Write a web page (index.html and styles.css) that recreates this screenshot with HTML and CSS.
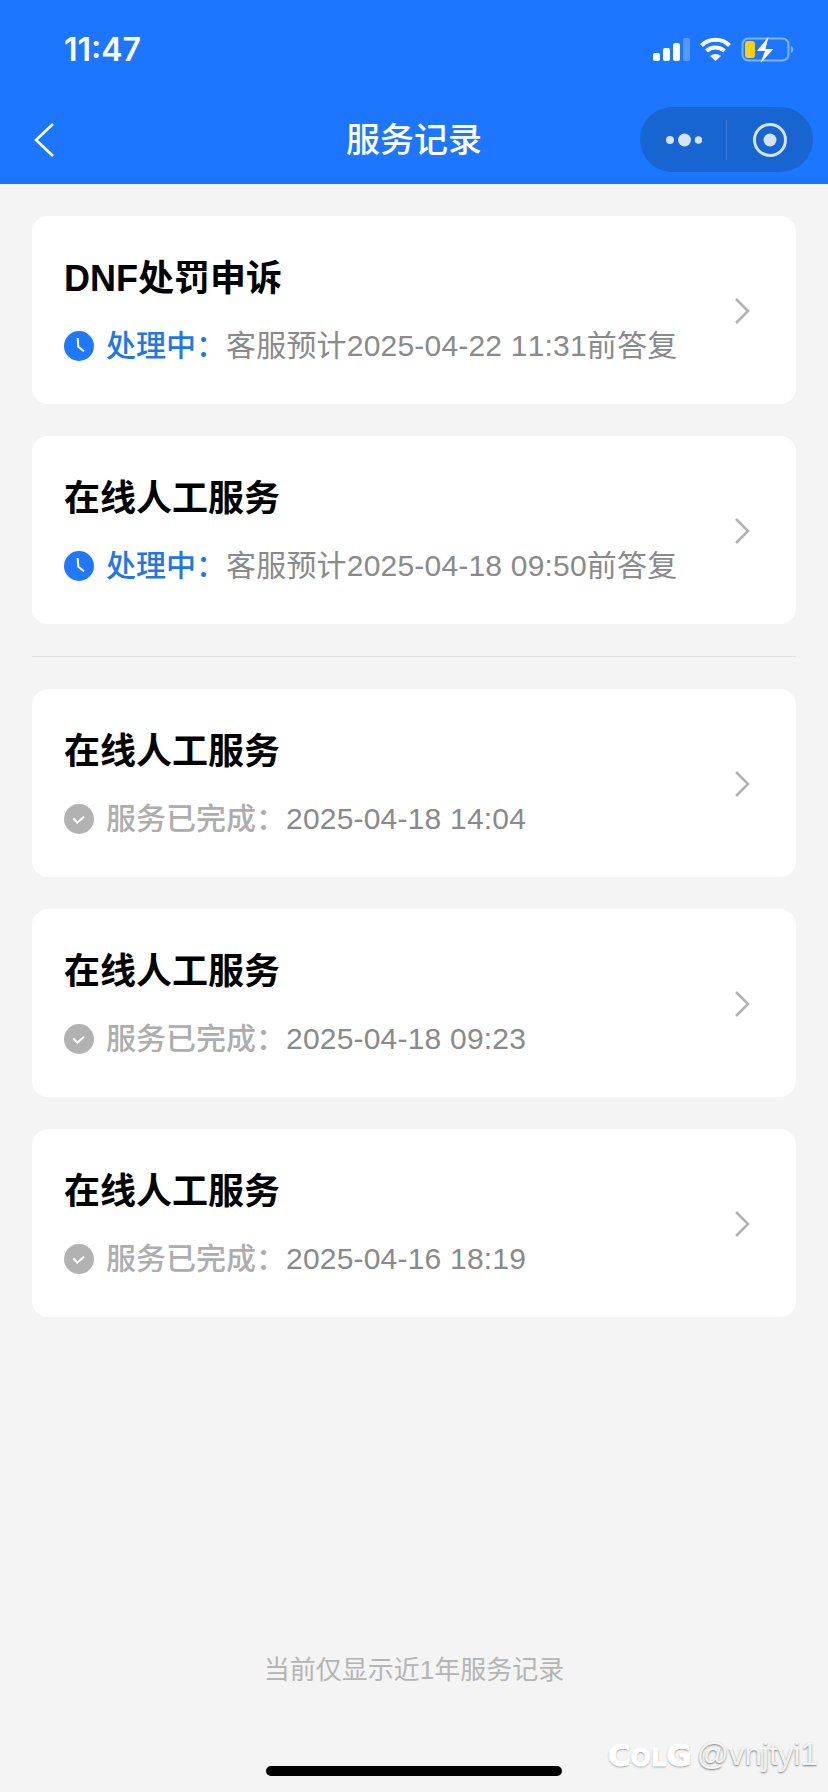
FILE: index.html
```html
<!DOCTYPE html>
<html lang="zh-CN">
<head>
<meta charset="UTF-8">
<meta name="viewport" content="width=device-width, initial-scale=1.0">
<title>服务记录</title>
<link rel="stylesheet" href="styles.css">
</head>
<body>

<div class="page">
  <div class="header">
    <div class="status">
      <span class="time">11:47</span>
      <svg class="status-icons" width="142" height="30" viewBox="0 0 142 30">
        <rect x="0" y="17" width="7" height="8" rx="2" fill="#fff"/>
        <rect x="10" y="12" width="7" height="13" rx="2" fill="#fff"/>
        <rect x="20" y="7" width="7" height="18" rx="2" fill="#fff"/>
        <rect x="30" y="2" width="7" height="23" rx="2" fill="#fff" opacity="0.25"/>
        <path d="M48.500 9.500 A20 20 0 0 1 76.500 9.500" fill="none" stroke="#fff" stroke-width="4"/>
        <path d="M53.500 15 A13 13 0 0 1 71.500 15" fill="none" stroke="#fff" stroke-width="4"/>
        <path d="M57 20 Q62.500 16 68 20 L62.500 25 Z" fill="#fff"/>
        <rect x="89.500" y="2.500" width="46" height="22" rx="6" fill="none" stroke="#fff" stroke-opacity="0.45" stroke-width="2"/>
        <rect x="92" y="5" width="10" height="17" rx="3" fill="#ffcf0a"/>
        <path d="M138 10 C141 11 141 16 138 17 Z" fill="#fff" opacity="0.45"/>
        <path d="M115.500 0.700 L104 15 L112 15 L107.500 27 L120.500 13 L112.500 13 Z" fill="#fff"/>
      </svg>
    </div>
    <div class="nav">
      <svg class="back" width="24" height="36" viewBox="0 0 24 36">
        <path d="M20 2 L3 18 L20 34" fill="none" stroke="#fff" stroke-width="2.600"/>
      </svg>
      <div class="nav-title">服务记录</div>
      <div class="capsule">
        <svg class="capsule-btn" width="36" height="16" viewBox="0 0 36 16">
          <circle cx="4" cy="8" r="4" fill="#d5e2f8"/>
          <circle cx="18.500" cy="8" r="6.500" fill="#d5e2f8"/>
          <circle cx="32.500" cy="8" r="3.800" fill="#d5e2f8"/>
        </svg>
        <span class="capsule-line"></span>
        <svg class="capsule-btn" width="36" height="36" viewBox="0 0 36 36">
          <circle cx="18" cy="18" r="15.500" fill="none" stroke="#d5e2f8" stroke-width="3"/>
          <circle cx="18" cy="18" r="6.500" fill="#d5e2f8"/>
        </svg>
      </div>
    </div>
  </div>

  <div class="list">
    <div class="card">
      <div class="card-info">
        <div class="card-title">DNF处罚申诉</div>
        <div class="card-state">
          <svg class="state-icon" width="30" height="30" viewBox="0 0 30 30">
            <circle cx="15" cy="15" r="15" fill="#1f78ff"/>
            <path d="M13.700 7 L14.300 15.700 L20 20.300" fill="none" stroke="#fff" stroke-width="2"/>
          </svg>
          <span class="state-doing">处理中&#65306;</span><span class="state-text">客服预计2025-04-22 11:31前答复</span>
        </div>
      </div>
      <svg class="arrow" width="16" height="28" viewBox="0 0 16 28">
        <path d="M2 2 L14 14 L2 26" fill="none" stroke="#b2b2b2" stroke-width="2.600"/>
      </svg>
    </div>

    <div class="card">
      <div class="card-info">
        <div class="card-title">在线人工服务</div>
        <div class="card-state">
          <svg class="state-icon" width="30" height="30" viewBox="0 0 30 30">
            <circle cx="15" cy="15" r="15" fill="#1f78ff"/>
            <path d="M13.700 7 L14.300 15.700 L20 20.300" fill="none" stroke="#fff" stroke-width="2"/>
          </svg>
          <span class="state-doing">处理中&#65306;</span><span class="state-text">客服预计2025-04-18 09:50前答复</span>
        </div>
      </div>
      <svg class="arrow" width="16" height="28" viewBox="0 0 16 28">
        <path d="M2 2 L14 14 L2 26" fill="none" stroke="#b2b2b2" stroke-width="2.600"/>
      </svg>
    </div>

    <div class="line"></div>

    <div class="card">
      <div class="card-info">
        <div class="card-title">在线人工服务</div>
        <div class="card-state">
          <svg class="state-icon" width="30" height="30" viewBox="0 0 30 30">
            <circle cx="15" cy="15" r="15" fill="#b2b2b2"/>
            <path d="M9.300 14.300 L13.300 18.700 L20 12.700" fill="none" stroke="#fff" stroke-width="2"/>
          </svg>
          <span class="state-done">服务已完成&#65306;</span><span class="state-text">2025-04-18 14:04</span>
        </div>
      </div>
      <svg class="arrow" width="16" height="28" viewBox="0 0 16 28">
        <path d="M2 2 L14 14 L2 26" fill="none" stroke="#b2b2b2" stroke-width="2.600"/>
      </svg>
    </div>

    <div class="card">
      <div class="card-info">
        <div class="card-title">在线人工服务</div>
        <div class="card-state">
          <svg class="state-icon" width="30" height="30" viewBox="0 0 30 30">
            <circle cx="15" cy="15" r="15" fill="#b2b2b2"/>
            <path d="M9.300 14.300 L13.300 18.700 L20 12.700" fill="none" stroke="#fff" stroke-width="2"/>
          </svg>
          <span class="state-done">服务已完成&#65306;</span><span class="state-text">2025-04-18 09:23</span>
        </div>
      </div>
      <svg class="arrow" width="16" height="28" viewBox="0 0 16 28">
        <path d="M2 2 L14 14 L2 26" fill="none" stroke="#b2b2b2" stroke-width="2.600"/>
      </svg>
    </div>

    <div class="card">
      <div class="card-info">
        <div class="card-title">在线人工服务</div>
        <div class="card-state">
          <svg class="state-icon" width="30" height="30" viewBox="0 0 30 30">
            <circle cx="15" cy="15" r="15" fill="#b2b2b2"/>
            <path d="M9.300 14.300 L13.300 18.700 L20 12.700" fill="none" stroke="#fff" stroke-width="2"/>
          </svg>
          <span class="state-done">服务已完成&#65306;</span><span class="state-text">2025-04-16 18:19</span>
        </div>
      </div>
      <svg class="arrow" width="16" height="28" viewBox="0 0 16 28">
        <path d="M2 2 L14 14 L2 26" fill="none" stroke="#b2b2b2" stroke-width="2.600"/>
      </svg>
    </div>
  </div>

  <div class="tips">当前仅显示近1年服务记录</div>
  <div class="home-bar"></div>

  <div class="mark">
    <span class="mark-logo">C<span class="mark-small">OL</span>G</span>
    <span class="mark-name">@vnjtyi1</span>
  </div>
</div>

</body>
</html>
```

FILE: styles.css
```css
*{
  margin: 0;
  padding: 0;
  box-sizing: border-box;
}
body{
  background-color: #f4f4f4;
  font-family: "Liberation Sans", "Noto Sans CJK SC", sans-serif;
  font-kerning: none;
}
.page{
  width: 828px;
  height: 1792px;
  position: relative;
  overflow: hidden;
  display: flex;
  flex-direction: column;
}

/* 顶部蓝色区域 */
.header{
  height: 184px;
  background-color: #1c76ff;
  color: #fff;
}
.status{
  height: 100px;
  padding: 34px 33px 0 64px;
  display: flex;
  justify-content: space-between;
  align-items: flex-start;
}
.time{
  font-family: Inter, sans-serif;
  font-size: 32px;
  line-height: 32px;
  font-weight: 600;
}
.status-icons{
  margin-top: 2px;
}
.nav{
  height: 84px;
  padding: 7px 15px 0 33px;
  display: flex;
  align-items: flex-start;
  position: relative;
}
.back{
  margin-top: 15px;
}
.nav-title{
  position: absolute;
  left: 0;
  right: 0;
  top: 15px;
  text-align: center;
  font-size: 34px;
  line-height: 50px;
  font-weight: 500;
}
.capsule{
  width: 173px;
  height: 65px;
  margin-left: auto;
  background-color: #1765d1;
  border-radius: 33px;
  display: flex;
  align-items: center;
  padding-left: 26px;
}
.capsule-line{
  width: 1px;
  height: 40px;
  margin: 0 25px 0 24px;
  background-color: #3a7cdb;
}

/* 记录列表 */
.list{
  padding: 32px 32px 0;
  display: flex;
  flex-direction: column;
  gap: 32px;
}
.card{
  height: 188px;
  padding: 38px 46px 0 32px;
  background-color: #fff;
  border-radius: 16px;
  display: flex;
  justify-content: space-between;
}
.card-title{
  font-size: 36px;
  line-height: 50px;
  font-weight: 700;
  color: #000;
}
.card-state{
  margin-top: 22px;
  display: flex;
  align-items: center;
  font-size: 30px;
  line-height: 40px;
  white-space: nowrap;
}
.state-icon{
  margin-right: 12px;
}
.state-doing{
  color: #1f78e8;
  font-weight: 500;
}
.state-done{
  color: #adadad;
  font-weight: 500;
}
.state-text{
  color: #8a8a8a;
  letter-spacing: 0.2px;
}
.arrow{
  margin-top: 43px;
  flex-shrink: 0;
}
.line{
  height: 1px;
  background-color: #dedede;
}

/* 底部 */
.tips{
  margin-top: auto;
  text-align: center;
  font-size: 26px;
  line-height: 36px;
  color: #b4b4b4;
}
.home-bar{
  width: 296px;
  height: 10px;
  margin: 78px auto 16px;
  background-color: #000;
  border-radius: 5px;
}
.mark{
  position: absolute;
  right: 10px;
  bottom: 19px;
  display: flex;
  align-items: center;
  gap: 5px;
  color: #fff;
  text-shadow: 0 1px 2px rgba(0, 0, 0, 0.5);
}
.mark-logo{
  font-family: "DejaVu Sans", sans-serif;
  font-size: 31px;
  font-weight: 700;
  -webkit-text-stroke: 1px #fff;
}
.mark-small{
  font-size: 24px;
}
.mark-name{
  font-size: 31.500px;
  color: rgba(255, 255, 255, 0.9);
}
```
